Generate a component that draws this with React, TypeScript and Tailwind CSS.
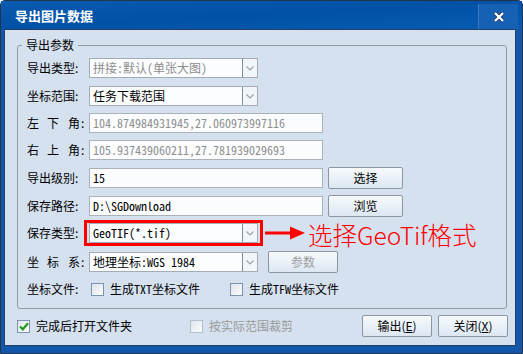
import React from 'react';

const ui = "font-['Noto_Sans_CJK_SC',sans-serif]";
const mono = "font-['Noto_Sans_Mono_CJK_SC','Noto_Sans_CJK_SC',monospace]";

function Chevron() {
  return (
    <svg width="8" height="5" viewBox="0 0 8 5">
      <polyline points="0.5,0.5 4,4 7.5,0.5" fill="none" stroke="#9aa3ad" strokeWidth="1.2" />
    </svg>
  );
}

function Combo({ value, disabled }: { value: string; disabled?: boolean }) {
  return (
    <div className="flex h-[20px] w-[169px] shrink-0 border border-[#a3abb5] bg-[#fcfdfe]">
      <div
        className={`flex flex-1 items-center pl-[3px] text-[12px] leading-none ${mono} ${
          disabled ? 'text-[#8d8d8d]' : 'text-black'
        }`}
      >
        {value}
      </div>
      <div className="flex w-[15px] items-center justify-center border-l border-[#7d8ea3] bg-[#f3f6f9]">
        <Chevron />
      </div>
    </div>
  );
}

function TextBox({ value, muted }: { value: string; muted?: boolean }) {
  return (
    <div
      className={`flex h-[20px] w-[234px] shrink-0 items-center border border-[#a9b1bb] bg-[#fbfcfe] pl-[3px] text-[12px] leading-none ${mono} ${
        muted ? 'text-[#8f8f8f]' : 'text-black'
      }`}
    >
      {value}
    </div>
  );
}

function Btn({ children, disabled, className = '' }: { children: React.ReactNode; disabled?: boolean; className?: string }) {
  return (
    <div
      className={`flex h-[22px] w-[70px] shrink-0 items-center justify-center rounded-[2px] border border-[#8b96a2] bg-gradient-to-b from-[#f7fafd] to-[#dce7f3] text-[12px] leading-none ${
        disabled ? 'text-[#9c9c9c]' : 'text-black'
      } ${className}`}
    >
      {children}
    </div>
  );
}

function Check({ checked, disabled }: { checked?: boolean; disabled?: boolean }) {
  return (
    <div
      className={`flex h-[13px] w-[13px] shrink-0 items-center justify-center border bg-gradient-to-br from-[#dfe5ec] to-[#fbfcfd] ${
        disabled ? 'border-[#b3c0cd]' : 'border-[#7b93ae]'
      }`}
    >
      {checked && (
        <svg width="10" height="9" viewBox="0 0 10 9">
          <path d="M1 4.5 L3.8 7.3 L9 1.3" fill="none" stroke="#1f9a1f" strokeWidth="2.2" />
        </svg>
      )}
    </div>
  );
}

function Label({ children }: { children: React.ReactNode }) {
  return <div className="flex w-[62px] shrink-0 items-center text-[12px] leading-none text-black">{children}</div>;
}

function Spaced({ a, b, c }: { a: string; b: string; c: string }) {
  return (
    <>
      <span className="w-[20px]">{a}</span>
      <span className="w-[21px]">{b}</span>
      <span>{c}</span>
      <span className="ml-[1px]">:</span>
    </>
  );
}

function Row({ children, className = '' }: { children: React.ReactNode; className?: string }) {
  return <div className={`flex h-[20px] items-center ${className}`}>{children}</div>;
}

export default function App() {
  return (
    <div className={`flex h-[354px] w-[523px] flex-col rounded-t-[5px] border border-[#22344f] bg-[#1358a8] ${ui}`}>
      {/* title bar */}
      <div className="flex h-[28px] shrink-0 items-center justify-between bg-gradient-to-br from-[#0a5ab0] via-[#0152a6] to-[#0a5cb2] pl-[14px]">
        <span className="text-[13px] font-bold leading-none text-white">导出图片数据</span>
        <div className="mr-[4px] mt-[3px] flex h-[25px] w-[40px] items-center justify-center border-l border-[#3a77c0] bg-[#1761b4]">
          <svg width="12" height="12" viewBox="0 0 12 12">
            <path d="M2 2 L10 10 M10 2 L2 10" stroke="#1b2f4a" strokeWidth="3.6" />
            <path d="M2 2 L10 10 M10 2 L2 10" stroke="#ffffff" strokeWidth="2.4" />
          </svg>
        </div>
      </div>

      {/* client area */}
      <div className="mb-[7px] ml-[3px] mr-[6px] flex flex-1 flex-col border border-[#24406a] bg-[#d5e1ef]">
        <div className="relative ml-[12px] mr-[8px] mt-[15px] rounded-[3px] border border-[#929ca7] pb-[9px] pl-[9px] pt-[12px]">
          <span className="absolute left-[4px] top-[-8px] bg-[#d5e1ef] px-[4px] text-[12px] leading-[14px] text-black">导出参数</span>

          <Row>
            <Label>导出类型:</Label>
            <Combo value="拼接:默认(单张大图)" disabled />
          </Row>
          <Row className="mt-[8px]">
            <Label>坐标范围:</Label>
            <Combo value="任务下载范围" />
          </Row>
          <Row className="mt-[7px]">
            <Label>
              <Spaced a="左" b="下" c="角" />
            </Label>
            <TextBox value="104.874984931945,27.060973997116" muted />
          </Row>
          <Row className="mt-[7px]">
            <Label>
              <Spaced a="右" b="上" c="角" />
            </Label>
            <TextBox value="105.937439060211,27.781939029693" muted />
          </Row>
          <Row className="mt-[8px]">
            <Label>导出级别:</Label>
            <TextBox value="15" />
            <Btn className="ml-[5px] w-[75px]">选择</Btn>
          </Row>
          <Row className="mt-[8px]">
            <Label>保存路径:</Label>
            <TextBox value="D:\SGDownload" />
            <Btn className="ml-[5px] w-[75px]">浏览</Btn>
          </Row>
          <Row className="mt-[7px]">
            <Label>保存类型:</Label>
            <div className="ml-[-5px] shrink-0 border-[3px] border-[#ff0000] px-[2px]">
              <Combo value="GeoTIF(*.tif)" />
            </div>
            <svg width="40" height="16" viewBox="0 0 40 16" className="ml-[2px] shrink-0">
              <rect x="0" y="6.5" width="28" height="3" fill="#ff0000" />
              <polygon points="25,1.5 40,8 25,14.5" fill="#ff0000" />
            </svg>
            <span className="ml-[3px] whitespace-nowrap pt-[5px] text-[24.5px] font-light leading-none text-[#ff0000]">选择GeoTif格式</span>
          </Row>
          <Row className="mt-[9px]">
            <Label>
              <Spaced a="坐" b="标" c="系" />
            </Label>
            <Combo value="地理坐标:WGS 1984" />
            <Btn disabled className="ml-[10px]">参数</Btn>
          </Row>
          <Row className="mt-[7px] text-[12px] leading-none">
            <Label>坐标文件:</Label>
            <div className="ml-[2px]">
              <Check />
            </div>
            <span className={`ml-[6px] ${mono}`}>生成TXT坐标文件</span>
            <div className="ml-[30px]">
              <Check />
            </div>
            <span className={`ml-[6px] ${mono}`}>生成TFW坐标文件</span>
          </Row>
        </div>

        <div className="ml-[12px] mr-[7px] mt-[6px] flex h-[22px] items-center text-[12px] leading-none">
          <Check checked />
          <span className="ml-[6px]">完成后打开文件夹</span>
          <div className="ml-[58px]">
            <Check disabled />
          </div>
          <span className="ml-[6px] text-[#9a9a9a]">按实际范围裁剪</span>
          <Btn className="ml-auto">
            输出(<span className="underline">E</span>)
          </Btn>
          <Btn className="ml-[6px]">
            关闭(<span className="underline">X</span>)
          </Btn>
        </div>
      </div>
    </div>
  );
}
